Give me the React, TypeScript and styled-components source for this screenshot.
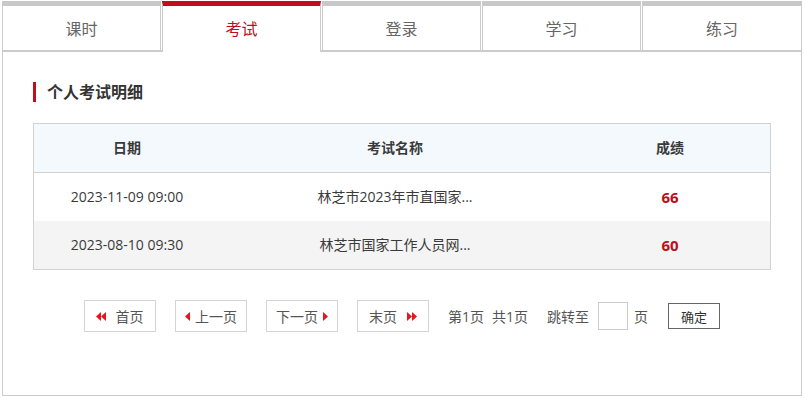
import React from "react";
import styled, { createGlobalStyle } from "styled-components";

const GlobalStyle = createGlobalStyle`
  body {
    margin: 0;
    background: #fff;
    font-family: "Microsoft YaHei", "Open Sans", "Noto Sans CJK SC", sans-serif;
    color: #333;
  }
`;

// Components
const Wrapper = styled.div`
  width: 800px;
  margin: 1px 0 0 2px;
`;

const TabBar = styled.div`
  display: flex;
  align-items: flex-start;
  height: 49px;
  border-bottom: 2px solid #ccc;
`;

const Tab = styled.div<{ $active?: boolean; $last?: boolean }>`
  box-sizing: border-box;
  width: ${(p) => (p.$last ? "160px" : "159px")};
  margin-right: ${(p) => (p.$last ? "0" : "1px")};
  height: ${(p) => (p.$active ? "51px" : "49px")};
  margin-bottom: ${(p) => (p.$active ? "-2px" : "0")};
  position: relative;
  z-index: ${(p) => (p.$active ? 1 : 0)};
  background: #fff;
  border-top: 5px solid ${(p) => (p.$active ? "#c30d1c" : "#c8c8c8")};
  border-left: 1px solid #ccc;
  border-right: 1px solid #ccc;
  display: flex;
  align-items: center;
  justify-content: center;
  padding-bottom: ${(p) => (p.$active ? "2px" : "0")};
  font-size: 16px;
  color: ${(p) => (p.$active ? "#c30d1c" : "#666")};
  cursor: pointer;
`;

const Panel = styled.div`
  box-sizing: border-box;
  height: 344px;
  padding: 30px;
  border: 1px solid #ccc;
  border-top: none;
`;

const Heading = styled.h3`
  margin: 0 0 21px;
  height: 20px;
  display: flex;
  align-items: center;
  font-size: 16px;
  font-weight: bold;
  color: #333;
  line-height: 20px;
  &::before {
    content: "";
    width: 3px;
    height: 20px;
    background: #c30d1c;
    margin-right: 11px;
  }
`;

const Table = styled.div`
  border: 1px solid #d2d2d2;
`;

const Row = styled.div<{ $head?: boolean; $stripe?: boolean }>`
  display: grid;
  grid-template-columns: 186px 350px 1fr;
  height: 48px;
  line-height: 48px;
  font-size: 14px;
  text-align: center;
  background: ${(p) => (p.$head ? "#f4f9fd" : p.$stripe ? "#f4f4f4" : "#fff")};
  border-bottom: ${(p) => (p.$head ? "1px solid #d2d2d2" : "none")};
  font-weight: ${(p) => (p.$head ? "bold" : "normal")};
  color: #3a3a3a;
`;

const Score = styled.span`
  color: #c00d1b;
  font-weight: bold;
  font-size: 15px;
`;

const Pager = styled.div`
  display: flex;
  justify-content: center;
  align-items: center;
  margin-top: 30px;
  height: 32px;
  font-size: 14px;
  color: #555;
`;

const PageButton = styled.a<{ $gap: number; $ml?: number }>`
  box-sizing: border-box;
  width: 72px;
  height: 32px;
  margin-left: ${(p) => p.$ml ?? 0}px;
  border: 1px solid #d4d4d4;
  display: inline-flex;
  align-items: center;
  justify-content: center;
  gap: ${(p) => p.$gap}px;
  color: #555;
  cursor: pointer;
  svg {
    display: block;
  }
`;

const PageText = styled.span<{ $ml: number }>`
  margin-left: ${(p) => p.$ml}px;
  white-space: nowrap;
`;

const JumpInput = styled.input`
  box-sizing: border-box;
  width: 30px;
  height: 28px;
  margin-left: 9px;
  border: 1px solid #ccc;
  padding: 0;
  outline: none;
`;

const ConfirmButton = styled.button`
  box-sizing: border-box;
  width: 52px;
  height: 26px;
  margin-left: 20px;
  border: 1px solid #666;
  background: #fff;
  font-family: inherit;
  font-size: 13px;
  color: #333;
  padding: 0;
  cursor: pointer;
`;

const RED = "#e8141b";

function LeftArrow({ double }: { double?: boolean }) {
  return double ? (
    <svg width="10" height="9" viewBox="0 0 10 9">
      <polygon points="5,0 0,4.5 5,9" fill={RED} />
      <polygon points="10,0 5,4.5 10,9" fill={RED} />
    </svg>
  ) : (
    <svg width="5" height="9" viewBox="0 0 5 9">
      <polygon points="5,0 0,4.5 5,9" fill={RED} />
    </svg>
  );
}

function RightArrow({ double }: { double?: boolean }) {
  return double ? (
    <svg width="10" height="9" viewBox="0 0 10 9">
      <polygon points="0,0 5,4.5 0,9" fill={RED} />
      <polygon points="5,0 10,4.5 5,9" fill={RED} />
    </svg>
  ) : (
    <svg width="5" height="9" viewBox="0 0 5 9">
      <polygon points="0,0 5,4.5 0,9" fill={RED} />
    </svg>
  );
}

interface IRecord {
  date: string;
  name: string;
  score: number;
}

const tabs = ["课时", "考试", "登录", "学习", "练习"];

const records: IRecord[] = [
  { date: "2023-11-09 09:00", name: "林芝市2023年市直国家...", score: 66 },
  { date: "2023-08-10 09:30", name: "林芝市国家工作人员网...", score: 60 },
];

function App() {
  return (
    <>
      <GlobalStyle />
      <Wrapper>
        <TabBar>
          {tabs.map((t, i) => (
            <Tab key={t} $active={i === 1} $last={i === tabs.length - 1}>
              {t}
            </Tab>
          ))}
        </TabBar>
        <Panel>
          <Heading>个人考试明细</Heading>
          <Table>
            <Row $head>
              <div>日期</div>
              <div>考试名称</div>
              <div>成绩</div>
            </Row>
            {records.map((r, i) => (
              <Row key={r.date} $stripe={i % 2 === 1}>
                <div>{r.date}</div>
                <div>{r.name}</div>
                <div>
                  <Score>{r.score}</Score>
                </div>
              </Row>
            ))}
          </Table>
          <Pager>
            <PageButton $gap={9}>
              <LeftArrow double />
              首页
            </PageButton>
            <PageButton $gap={5} $ml={19}>
              <LeftArrow />
              上一页
            </PageButton>
            <PageButton $gap={5} $ml={19}>
              下一页
              <RightArrow />
            </PageButton>
            <PageButton $gap={10} $ml={19}>
              末页
              <RightArrow double />
            </PageButton>
            <PageText $ml={19}>第1页</PageText>
            <PageText $ml={8}>共1页</PageText>
            <PageText $ml={19}>跳转至</PageText>
            <JumpInput type="text" />
            <PageText $ml={6}>页</PageText>
            <ConfirmButton>确定</ConfirmButton>
          </Pager>
        </Panel>
      </Wrapper>
    </>
  );
}

export default App;
